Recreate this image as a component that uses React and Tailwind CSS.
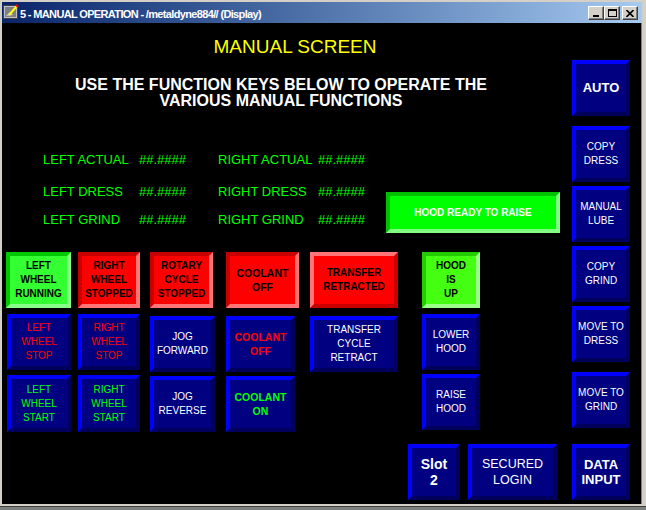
const F = "font-['Liberation_Sans',Arial,sans-serif]";

// bevel looks for the HMI keys
const LOOK = {
  blue: "border-4 border-t-[#0000ff] border-l-[#0000ff] border-r-[#00005c] border-b-[#00005c] bg-[#000080]",
  redIn: "border-4 border-t-[#c80000] border-l-[#c80000] border-r-[#ff7474] border-b-[#ff7474] bg-[#ff0000]",
  redOut: "border-4 border-t-[#ff7474] border-l-[#ff7474] border-r-[#c80000] border-b-[#c80000] bg-[#ff0000]",
  greenIn: "border-4 border-t-[#00c800] border-l-[#00c800] border-r-[#88ff88] border-b-[#88ff88] bg-[#33ff33]",
  limeIn: "border-4 border-t-[#22cc00] border-l-[#22cc00] border-r-[#99ff88] border-b-[#99ff88] bg-[#44ff11]",
  hood: "border-4 border-t-[#00c000] border-l-[#00c000] border-r-[#80ff80] border-b-[#80ff80] bg-[#00ff00]",
};

const STATUS_TEXT = "text-[10px] font-bold leading-[14px] text-black";
const KEY_TEXT = "text-[10px] leading-[14px]";

function Key({ look = "blue", className = "", children }) {
  return (
    <div className={`flex shrink-0 flex-col items-center justify-center text-center ${LOOK[look]} ${className}`}>
      {children}
    </div>
  );
}

function Lines({ lines, className }) {
  return (
    <div className={className}>
      {lines.map((l) => (
        <div key={l}>{l}</div>
      ))}
    </div>
  );
}

function AppIcon() {
  return (
    <svg width="16" height="16" viewBox="0 0 16 16">
      <rect x="0.5" y="1.5" width="14" height="13" fill="#c0c0c0" stroke="#404040" />
      <rect x="2" y="3" width="11" height="10" fill="#808080" />
      <path d="M3 12 L7 8 L10 11 Z" fill="#d0d0d0" />
      <path d="M6 11 L14 2" stroke="#ffff00" strokeWidth="2" />
      <path d="M13 1 L15 3" stroke="#ff0000" strokeWidth="2" />
    </svg>
  );
}

function CapButton({ children, className = "" }) {
  return (
    <div
      className={`flex h-[14px] w-[16px] items-center justify-center border border-t-white border-l-white border-r-[#404040] border-b-[#404040] bg-[#d4d0c8] shadow-[inset_-1px_-1px_#808080] ${className}`}
    >
      {children}
    </div>
  );
}

function TitleBar() {
  return (
    <div className="flex h-[21px] w-[640px] items-start bg-gradient-to-r from-[#0a246a] to-[#a6caf0]">
      <div className="ml-[1px] mt-[2px]">
        <AppIcon />
      </div>
      <div className="ml-[1px] pt-[5px] text-[11px] font-bold leading-[14px] tracking-[-0.65px] text-white">
        5 - MANUAL OPERATION - /metaldyne884// (Display)
      </div>
      <div className="ml-auto mr-[4px] mt-[4px] flex">
        <CapButton>
          <div className="mt-[6px] h-[2px] w-[6px] bg-black" />
        </CapButton>
        <CapButton>
          <div className="h-[8px] w-[9px] border border-t-2 border-black" />
        </CapButton>
        <CapButton className="ml-[2px]">
          <svg width="8" height="7" viewBox="0 0 8 7">
            <path d="M0.5 0 L7.5 7 M7.5 0 L0.5 7" stroke="black" strokeWidth="1.6" />
          </svg>
        </CapButton>
      </div>
    </div>
  );
}

const READOUTS = [
  ["LEFT ACTUAL", "RIGHT ACTUAL", ""],
  ["LEFT DRESS", "RIGHT DRESS", "mt-[16px]"],
  ["LEFT GRIND", "RIGHT GRIND", "mt-[12px]"],
];

function Main() {
  return (
    <div className="flex w-[570px] shrink-0 flex-col">
      <div className="mt-[13px] pl-[16px] text-center text-[19px] leading-[22px] text-[#ffff00]">MANUAL SCREEN</div>
      <div className="mt-[19px] pr-[12px] text-center text-[16px] font-bold leading-[16px] text-white">
        <div>USE THE FUNCTION KEYS BELOW TO OPERATE THE</div>
        <div>VARIOUS MANUAL FUNCTIONS</div>
      </div>

      <div className="mt-[43px] flex items-start">
        <div className="pl-[41px] text-[13px] leading-[16px] text-[#00ff00]">
          {READOUTS.map(([l, r, mt]) => (
            <div key={l} className={`flex ${mt}`}>
              <span className="w-[96px]">{l}</span>
              <span className="w-[79px]">##.####</span>
              <span className="w-[100px]">{r}</span>
              <span>##.####</span>
            </div>
          ))}
        </div>
        <Key look="hood" className="ml-auto mr-[12px] mt-[40px] h-[41px] w-[174px]">
          <span className="text-[10px] font-bold text-white">HOOD READY TO RAISE</span>
        </Key>
      </div>

      {/* key grid */}
      <div className="mt-[19px] flex items-start">
        <div className="ml-[4px] flex w-[65px] flex-col items-end">
          <Key look="greenIn" className="h-[56px] w-[65px]">
            <Lines lines={["LEFT", "WHEEL", "RUNNING"]} className={STATUS_TEXT} />
          </Key>
          <Key className="mt-[6px] h-[56px] w-[64px]">
            <Lines lines={["LEFT", "WHEEL", "STOP"]} className={`${KEY_TEXT} text-[#ff0000]`} />
          </Key>
          <Key className="mt-[5px] h-[57px] w-[64px]">
            <Lines lines={["LEFT", "WHEEL", "START"]} className={`${KEY_TEXT} text-[#00ff00]`} />
          </Key>
        </div>
        <div className="ml-[7px] flex w-[62px] flex-col">
          <Key look="redIn" className="h-[56px] w-[62px]">
            <Lines lines={["RIGHT", "WHEEL", "STOPPED"]} className={STATUS_TEXT} />
          </Key>
          <Key className="mt-[6px] h-[56px] w-[62px]">
            <Lines lines={["RIGHT", "WHEEL", "STOP"]} className={`${KEY_TEXT} text-[#ff0000]`} />
          </Key>
          <Key className="mt-[5px] h-[57px] w-[62px]">
            <Lines lines={["RIGHT", "WHEEL", "START"]} className={`${KEY_TEXT} text-[#00ff00]`} />
          </Key>
        </div>
        <div className="ml-[10px] flex w-[65px] flex-col">
          <Key look="redIn" className="h-[56px] w-[63px]">
            <Lines lines={["ROTARY", "CYCLE", "STOPPED"]} className={STATUS_TEXT} />
          </Key>
          <Key className="mt-[8px] h-[56px] w-[65px]">
            <Lines lines={["JOG", "FORWARD"]} className={`${KEY_TEXT} text-white`} />
          </Key>
          <Key className="mt-[4px] h-[56px] w-[65px]">
            <Lines lines={["JOG", "REVERSE"]} className={`${KEY_TEXT} text-white`} />
          </Key>
        </div>
        <div className="ml-[11px] flex w-[73px] flex-col">
          <Key look="redIn" className="h-[56px] w-[73px]">
            <Lines lines={["COOLANT", "OFF"]} className="text-[10.5px] font-bold leading-[14px] text-black" />
          </Key>
          <Key className="mt-[8px] h-[56px] w-[69px]">
            <Lines lines={["COOLANT", "OFF"]} className="text-[10.5px] font-bold leading-[14px] text-[#ff0000]" />
          </Key>
          <Key className="mt-[4px] h-[56px] w-[69px]">
            <Lines lines={["COOLANT", "ON"]} className="text-[10.5px] font-bold leading-[14px] text-[#00ff00]" />
          </Key>
        </div>
        <div className="ml-[11px] flex w-[88px] flex-col">
          <Key look="redOut" className="h-[56px] w-[88px]">
            <Lines lines={["TRANSFER", "RETRACTED"]} className={STATUS_TEXT} />
          </Key>
          <Key className="mt-[8px] h-[56px] w-[88px]">
            <Lines lines={["TRANSFER", "CYCLE", "RETRACT"]} className={`${KEY_TEXT} text-white`} />
          </Key>
        </div>
        <div className="ml-[24px] flex w-[58px] flex-col">
          <Key look="limeIn" className="h-[56px] w-[58px]">
            <Lines lines={["HOOD", "IS", "UP"]} className={STATUS_TEXT} />
          </Key>
          <Key className="mt-[6px] h-[56px] w-[58px]">
            <Lines lines={["LOWER", "HOOD"]} className={`${KEY_TEXT} text-white`} />
          </Key>
          <Key className="mt-[4px] h-[56px] w-[58px]">
            <Lines lines={["RAISE", "HOOD"]} className={`${KEY_TEXT} text-white`} />
          </Key>
        </div>
      </div>

      <div className="mt-[12px] flex justify-end gap-[8px] pr-[15px]">
        <Key className="h-[56px] w-[52px]">
          <Lines lines={["Slot", "2"]} className="text-[14px] font-bold leading-[16px] text-white" />
        </Key>
        <Key className="h-[56px] w-[89px]">
          <Lines lines={["SECURED", "LOGIN"]} className="text-[12.5px] leading-[16px] text-white" />
        </Key>
      </div>
    </div>
  );
}

function RightColumn() {
  return (
    <div className="flex w-[58px] flex-col pt-[37px]">
      <Key className="h-[56px] w-[58px]">
        <span className="text-[13px] font-bold text-white">AUTO</span>
      </Key>
      <Key className="mt-[10px] h-[56px] w-[58px]">
        <Lines lines={["COPY", "DRESS"]} className={`${KEY_TEXT} text-white`} />
      </Key>
      <Key className="mt-[4px] h-[56px] w-[58px]">
        <Lines lines={["MANUAL", "LUBE"]} className={`${KEY_TEXT} text-white`} />
      </Key>
      <Key className="mt-[4px] h-[56px] w-[58px]">
        <Lines lines={["COPY", "GRIND"]} className={`${KEY_TEXT} text-white`} />
      </Key>
      <Key className="mt-[4px] h-[56px] w-[58px]">
        <Lines lines={["MOVE TO", "DRESS"]} className={`${KEY_TEXT} text-white`} />
      </Key>
      <Key className="mt-[10px] h-[56px] w-[58px]">
        <Lines lines={["MOVE TO", "GRIND"]} className={`${KEY_TEXT} text-white`} />
      </Key>
      <Key className="mt-[16px] h-[56px] w-[58px]">
        <Lines lines={["DATA", "INPUT"]} className="text-[13px] font-bold leading-[15px] text-white" />
      </Key>
    </div>
  );
}

export default function App() {
  return (
    <div className={`h-[510px] w-[646px] overflow-hidden bg-[#d4d0c8] ${F}`}>
      <div className="flex h-[506px] flex-col pl-[2px] pt-[2px]">
        <TitleBar />
        <div className="flex h-[481px]">
          <div className="flex w-[639px] bg-black">
            <Main />
            <RightColumn />
          </div>
          <div className="w-px bg-[#808080]" />
        </div>
      </div>
      <div className="h-[4px] border-t border-[#404040] bg-[#808080]" />
    </div>
  );
}
